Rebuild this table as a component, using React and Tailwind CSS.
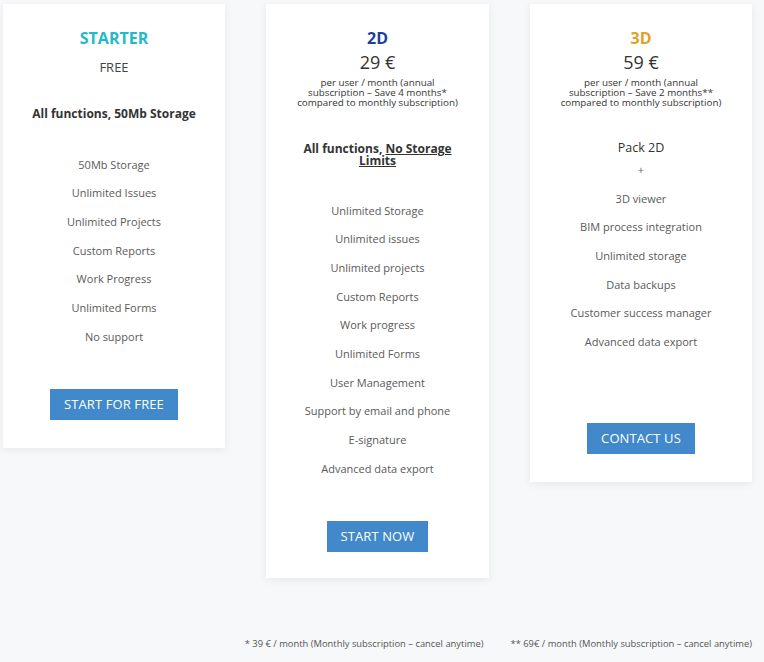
import React from 'react'

const font = { fontFamily: '"Open Sans", "Liberation Sans", sans-serif' }

function Feature({ children }) {
    return <li className="text-[11px] leading-[28.67px] text-[#5a5a5a]">{children}</li>
}

function Button({ children }) {
    return (
        <button className="bg-[#4189ca] text-white text-[13px] h-[31px] px-[14px] uppercase tracking-[0.1px]">
            {children}
        </button>
    )
}

export default function App() {
    const starter = ['50Mb Storage', 'Unlimited Issues', 'Unlimited Projects', 'Custom Reports', 'Work Progress', 'Unlimited Forms', 'No support']
    const twoD = ['Unlimited Storage', 'Unlimited issues', 'Unlimited projects', 'Custom Reports', 'Work progress', 'Unlimited Forms', 'User Management', 'Support by email and phone', 'E-signature', 'Advanced data export']
    const threeD = ['3D viewer', 'BIM process integration', 'Unlimited storage', 'Data backups', 'Customer success manager', 'Advanced data export']

    return (
        <div className="min-h-[662px] bg-[#f7f8fa]" style={font}>
            <div className="w-[752px] pl-[3px] pt-[4px]">
                <div className="flex items-start gap-[41px]">
                    {/* starter */}
                    <div className="w-[222px] bg-white shadow-[0_2px_8px_rgba(0,0,0,0.07)] flex flex-col items-center text-center pt-[24px] pb-[28px]">
                        <h2 className="text-[16px] leading-[20px] font-bold text-[#22b9cc]">STARTER</h2>
                        <p className="mt-[10px] text-[13px] leading-[18px] text-[#444]">FREE</p>
                        <p className="mt-[29px] text-[12px] leading-[18px] font-bold text-[#333]">All functions, 50Mb Storage</p>
                        <ul className="mt-[27.7px]">
                            {starter.map((f) => <Feature key={f}>{f}</Feature>)}
                        </ul>
                        <div className="mt-[37.7px]"><Button>Start for free</Button></div>
                    </div>

                    {/* 2D */}
                    <div className="w-[223px] bg-white shadow-[0_2px_8px_rgba(0,0,0,0.07)] flex flex-col items-center text-center pt-[24px] pb-[26px]">
                        <h2 className="text-[16px] leading-[20px] font-bold text-[#1b3f9a]">2D</h2>
                        <p className="mt-[3px] text-[18px] leading-[22px] text-[#333]">29 €</p>
                        <p className="mt-[5px] text-[9.8px] leading-[10px] text-[#333]">
                            per user / month (annual<br />subscription – Save 4 months*<br />compared to monthly subscription)
                        </p>
                        <p className="mt-[35px] text-[12px] leading-[12px] font-bold text-[#333]">
                            All functions, <span className="underline">No Storage</span><br /><span className="underline">Limits</span>
                        </p>
                        <ul className="mt-[29.7px]">
                            {twoD.map((f) => <Feature key={f}>{f}</Feature>)}
                        </ul>
                        <div className="mt-[37.7px]"><Button>Start now</Button></div>
                    </div>

                    {/* 3D */}
                    <div className="w-[222px] bg-white shadow-[0_2px_8px_rgba(0,0,0,0.07)] flex flex-col items-center text-center pt-[24px] pb-[28px]">
                        <h2 className="text-[16px] leading-[20px] font-bold text-[#dfa127]">3D</h2>
                        <p className="mt-[3px] text-[18px] leading-[22px] text-[#333]">59 €</p>
                        <p className="mt-[5px] text-[9.8px] leading-[10px] text-[#333]">
                            per user / month (annual<br />subscription – Save 2 months**<br />compared to monthly subscription)
                        </p>
                        <p className="mt-[31px] text-[12.5px] leading-[18px] text-[#333]">Pack 2D</p>
                        <p className="mt-[6px] text-[11px] leading-[14px] text-[#666]">+</p>
                        <ul className="mt-[7.7px]">
                            {threeD.map((f) => <Feature key={f}>{f}</Feature>)}
                        </ul>
                        <div className="mt-[66.3px]"><Button>Contact us</Button></div>
                    </div>
                </div>

                <div className="mt-[60px] flex justify-end gap-[27px] text-[9.4px] leading-[12px] text-[#555]">
                    <span>* 39 € / month (Monthly subscription – cancel anytime)</span>
                    <span>** 69€ / month (Monthly subscription – cancel anytime)</span>
                </div>
            </div>
        </div>
    )
}
